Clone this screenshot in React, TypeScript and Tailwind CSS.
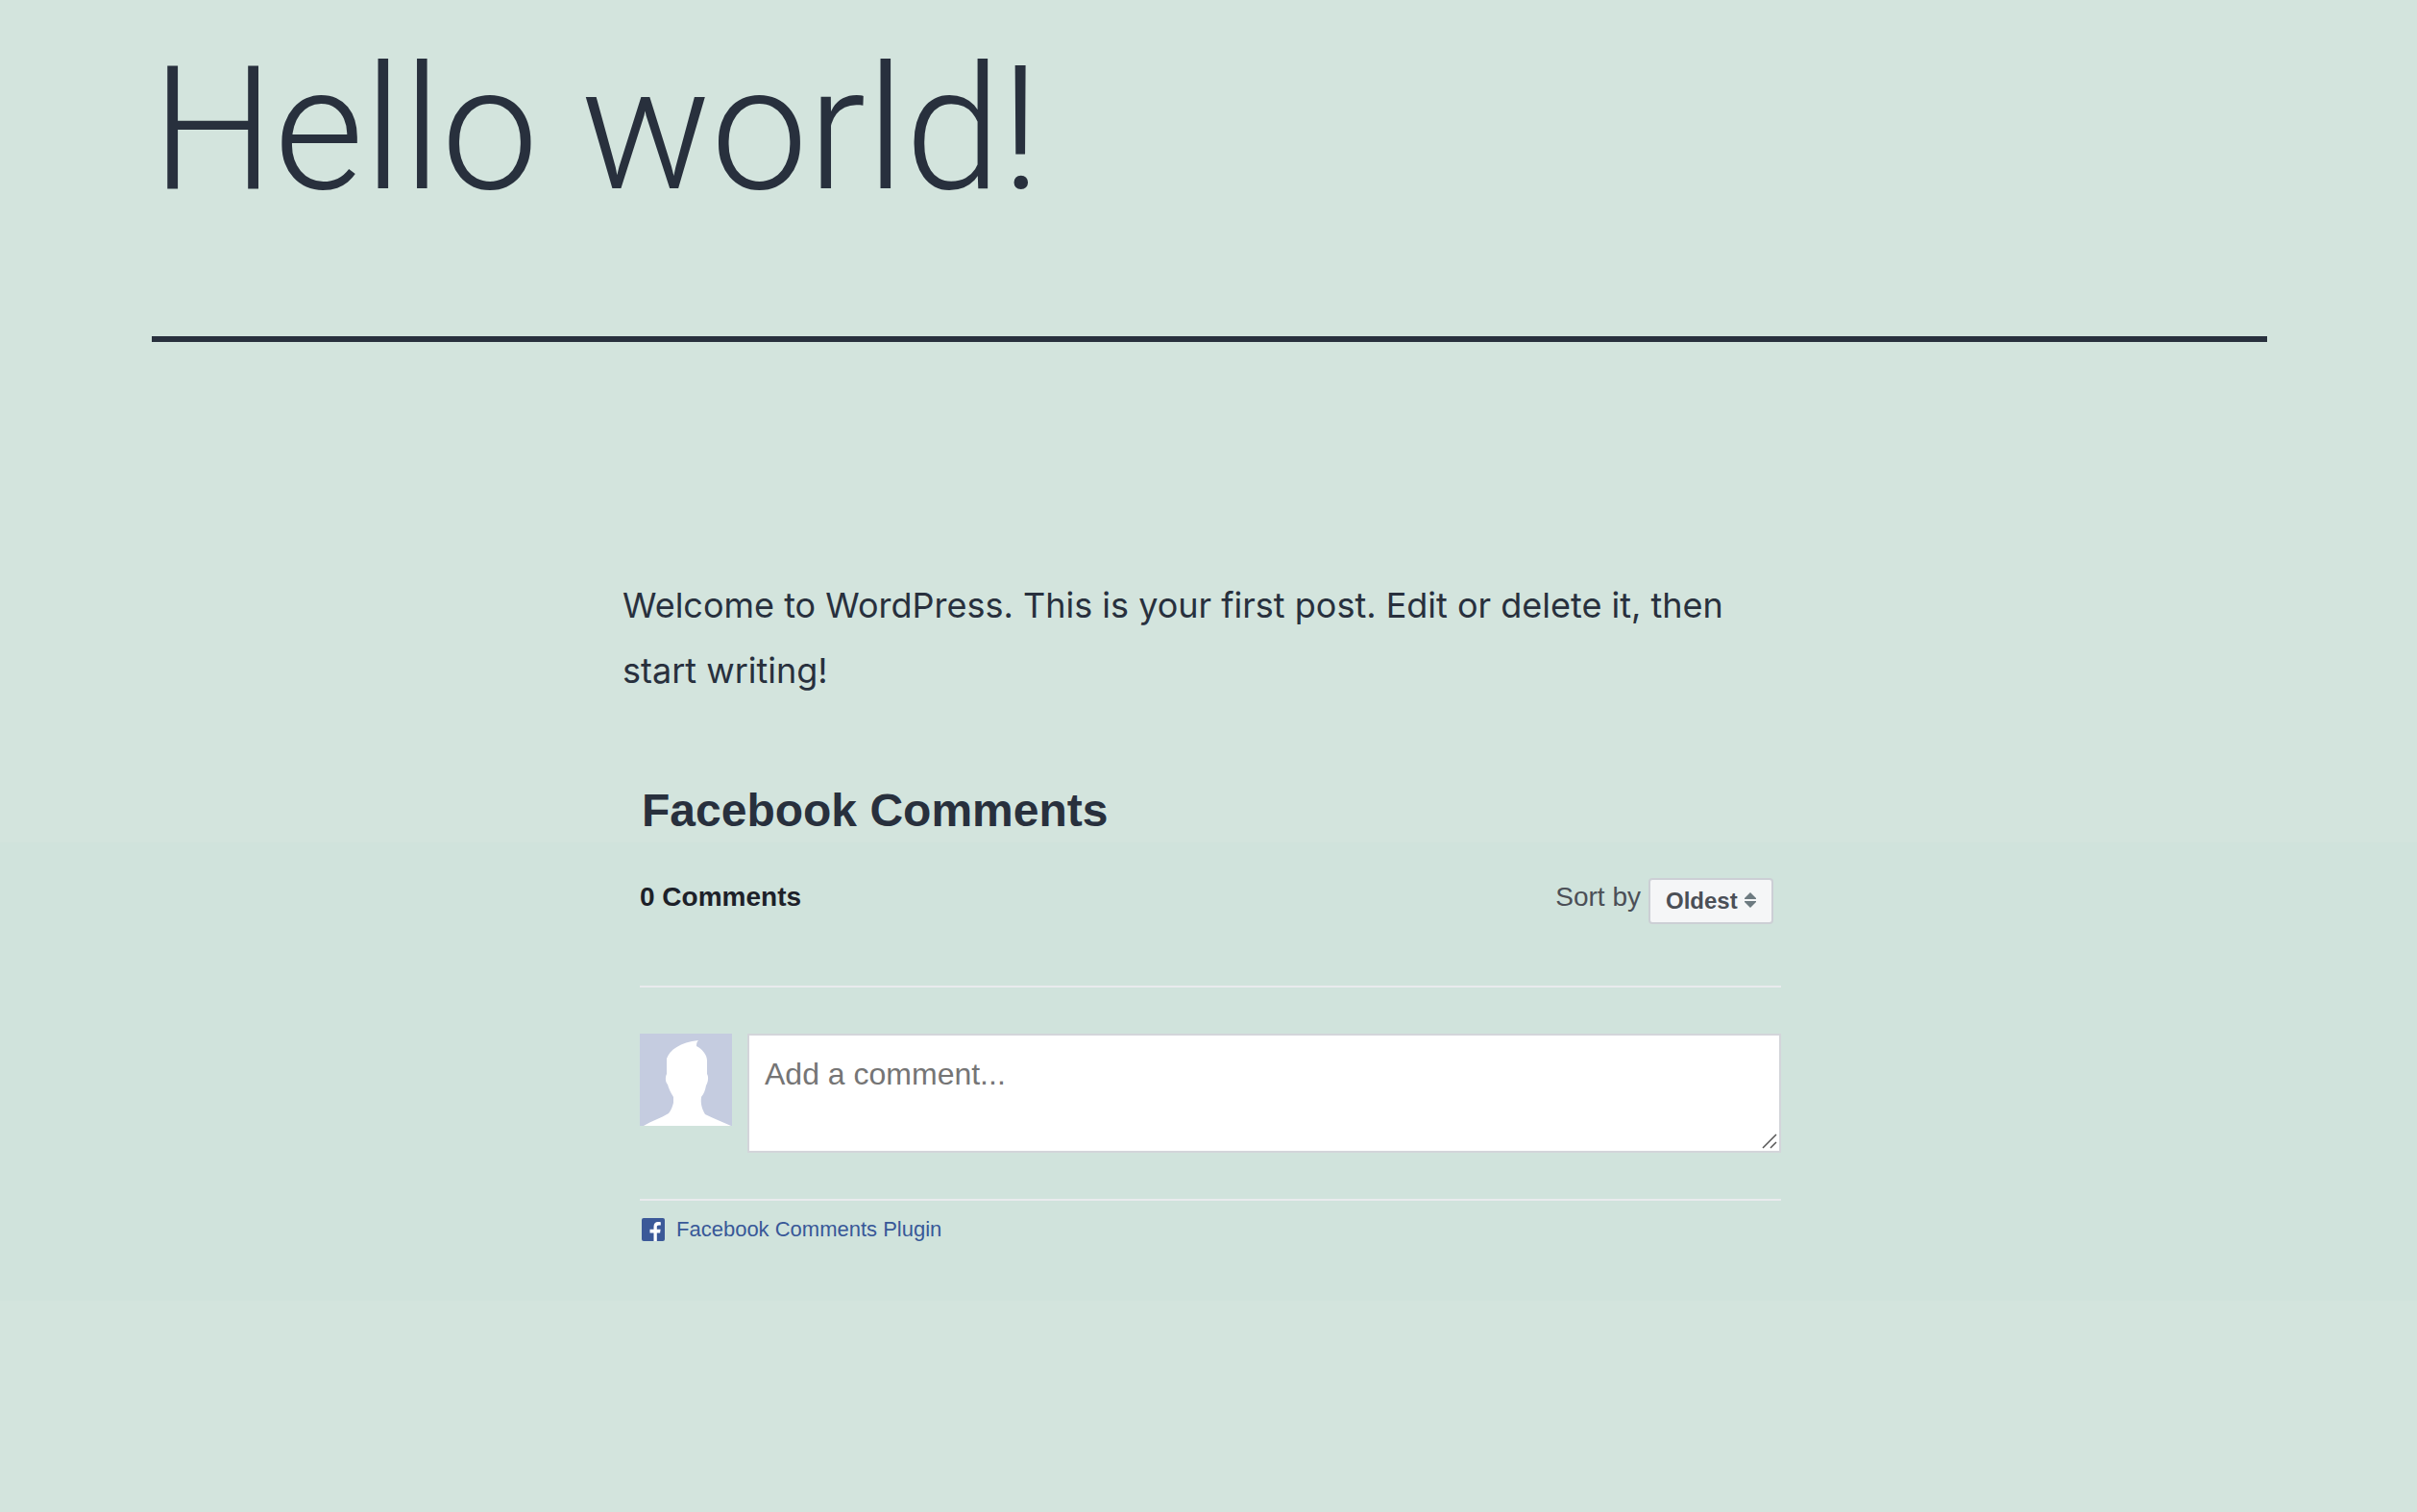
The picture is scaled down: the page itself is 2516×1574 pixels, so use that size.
import { useState } from 'react';

function Avatar() {
  return (
    <svg viewBox="0 0 96 96" className="size-24 shrink-0 bg-[#c5cce0]" role="img" aria-label="Guest">
      <path
        fill="#fff"
        d="M4 96C12 91 22 88 30 83C33 79 34 76 35 72L35 66C32 61 30 57 29 53C27 51 26 46 28 42L28 26C31 17 42 9 61 7C59 9 59 11 59 13C65 16 70 22 70 28L70 42C72 45 71 51 69 54C68 59 67 62 64 66C63 73 65 79 68 84C76 88 86 92 95 96Z"
      />
    </svg>
  );
}

function FacebookIcon() {
  return (
    <svg viewBox="0 0 24 24" className="size-6" aria-hidden="true">
      <rect width="24" height="24" rx="2" fill="#3b5998" />
      <path
        fill="#fff"
        d="M12.500 24V15.500H8.500V11.800H12.500V9C12.500 5.700 14.200 4 17 4C18.400 4 19.500 4.100 19.800 4.200V7.500H17.800C16.200 7.500 15.800 8.200 15.800 9.400V11.800H19.600L19.100 15.500H15.800V24Z"
      />
    </svg>
  );
}

function SortSelect() {
  const [order, setOrder] = useState('oldest');

  return (
    <div className="flex items-start gap-2">
      <label htmlFor="sort" className="pt-1 text-[28px] leading-8 text-[#4b4f56]">
        Sort by
      </label>
      <div className="relative">
        <select
          id="sort"
          value={order}
          onChange={(e) => setOrder(e.target.value)}
          className="h-12 w-[130px] appearance-none rounded-sm border-2 border-[#cccfd5] bg-[#f5f6f7] pl-4 text-2xl leading-8 font-bold text-[#4b4f56]"
        >
          <option value="oldest">Oldest</option>
          <option value="newest">Newest</option>
        </select>
        <svg
          viewBox="0 0 12 16"
          className="pointer-events-none absolute top-[15px] right-[18px] h-4 w-3 fill-[#6d7a80]"
          aria-hidden="true"
        >
          <path d="M6 0L12 6V7H0V6Z" />
          <path d="M6 16L12 10V9H0V10Z" />
        </svg>
      </div>
    </div>
  );
}

function CommentBox() {
  return (
    <div className="flex items-start gap-4 border-y-2 border-[#e9ebee] py-12">
      <Avatar />
      <div className="relative flex-1">
        <textarea
          aria-label="Add a comment"
          placeholder="Add a comment..."
          className="block h-[124px] w-full resize-none border-2 border-[#d3d5da] bg-white px-4 py-5 text-[32px] leading-10 placeholder:text-[#757575]"
        />
        <svg
          viewBox="0 0 16 16"
          className="pointer-events-none absolute right-1 bottom-1 size-4 stroke-[#555]"
          strokeWidth="1.500"
          aria-hidden="true"
        >
          <path d="M1 15L15 1M9 15L15 9" />
        </svg>
      </div>
    </div>
  );
}

export default function App() {
  return (
    <div className="min-h-screen bg-[#d3e4dd] font-['Liberation_Sans',Arial,sans-serif] text-[#28303d]">
      <header className="mr-[156px] ml-[158px] border-b-[6px] border-[#28303d] pt-6 pb-[104px]">
        <h1 className="font-[Roboto,sans-serif] text-[180px] leading-[222px] font-light">Hello world!</h1>
      </header>

      <main className="pt-[240px]">
        <article className="mx-auto max-w-[1220px]">
          <p className="font-[Inter,sans-serif] text-[36px] leading-[68px]">
            Welcome to WordPress. This is your first post. Edit or delete it, then start writing!
          </p>
          <h2 className="mt-[84px] pb-[5px] pl-5 text-[48px] leading-[56px] font-bold">Facebook Comments</h2>
        </article>

        <section className="bg-[#d0e3dc] pb-[60px]">
          <div className="mx-auto max-w-[1220px] pr-[14px] pl-[18px]">
            <div className="flex justify-between pt-[37px] pr-2 pb-16">
              <h3 className="pt-1 text-[28px] leading-8 font-bold text-[#1d2129]">0 Comments</h3>
              <SortSelect />
            </div>
            <CommentBox />
            <a href="#plugin" className="mt-4 flex items-center gap-3 pl-[2px] text-[22px] leading-7 text-[#385898]">
              <FacebookIcon />
              Facebook Comments Plugin
            </a>
          </div>
        </section>
      </main>
    </div>
  );
}
